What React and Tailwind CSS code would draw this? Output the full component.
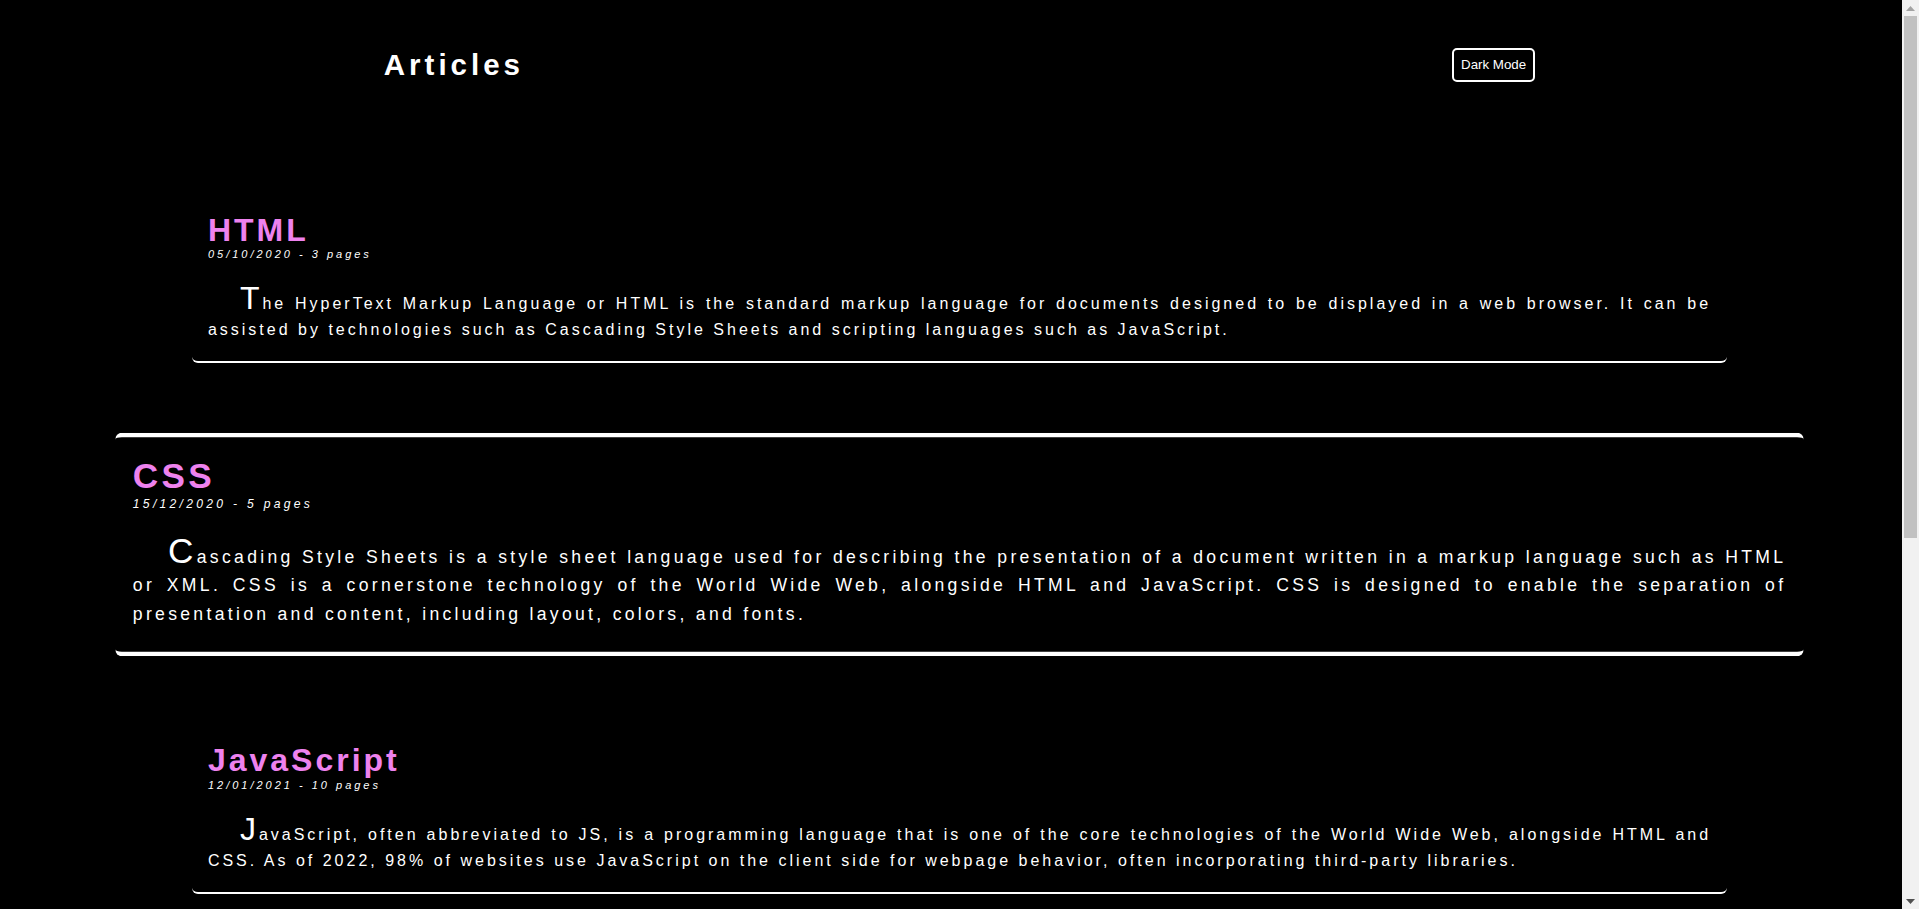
import React from "react";

const articles = [
  {
    title: "HTML",
    meta: "05/10/2020 - 3 pages",
    text: "The HyperText Markup Language or HTML is the standard markup language for documents designed to be displayed in a web browser. It can be assisted by technologies such as Cascading Style Sheets and scripting languages such as JavaScript.",
    active: false,
  },
  {
    title: "CSS",
    meta: "15/12/2020 - 5 pages",
    text: "Cascading Style Sheets is a style sheet language used for describing the presentation of a document written in a markup language such as HTML or XML. CSS is a cornerstone technology of the World Wide Web, alongside HTML and JavaScript. CSS is designed to enable the separation of presentation and content, including layout, colors, and fonts.",
    active: true,
  },
  {
    title: "JavaScript",
    meta: "12/01/2021 - 10 pages",
    text: "JavaScript, often abbreviated to JS, is a programming language that is one of the core technologies of the World Wide Web, alongside HTML and CSS. As of 2022, 98% of websites use JavaScript on the client side for webpage behavior, often incorporating third-party libraries.",
    active: false,
  },
];

function Card({ a }) {
  const base = "w-[80vw] ml-[10vw] rounded-md border-white px-4 bg-black";
  const cls = a.active
    ? base + " border-y-4 pt-[17px] pb-[21px] scale-110"
    : base + " border-b-2 pt-4 pb-[18px]";
  return (
    <article className={cls}>
      <h2 className="text-[32px] leading-[1.15] font-bold tracking-[3px] text-[#ee82ee]">
        {a.title}
      </h2>
      <div className="text-[11px] leading-[1.15] italic tracking-[3px] text-white">
        {a.meta}
      </div>
      <p className="mt-6 text-[16px] leading-[26px] tracking-[3px] text-justify indent-8 text-white first-letter:text-[32px]">
        {a.text}
      </p>
    </article>
  );
}

function Scrollbar() {
  return (
    <div className="w-[17px] h-screen shrink-0 bg-[#f1f1f1] flex flex-col items-center">
      <div className="h-[16px] w-full flex items-center justify-center">
        <svg width="9" height="5" viewBox="0 0 9 5">
          <polygon points="4.5,0 9,5 0,5" fill="#a3a3a3" />
        </svg>
      </div>
      <div className="w-[13px] h-[522px] bg-[#c1c1c1]" />
      <div className="flex-1" />
      <div className="h-[16px] w-full flex items-center justify-center">
        <svg width="9" height="5" viewBox="0 0 9 5">
          <polygon points="0,0 9,0 4.5,5" fill="#505050" />
        </svg>
      </div>
    </div>
  );
}

export default function App() {
  return (
    <div className="h-screen overflow-hidden flex bg-black">
      <div className="flex-1 h-screen overflow-hidden bg-black text-white font-['Liberation_Sans',Arial,sans-serif]">
        <header className="h-[130px] w-[60vw] ml-[20vw] flex items-center justify-between">
          <h1 className="text-[29.5px] leading-[1.15] font-bold tracking-[4px] text-white">
            Articles
          </h1>
          <button className="border-2 border-white rounded-[5px] bg-black text-white text-[13.33px] leading-[1.15] px-[7px] py-[7px]">
            Dark Mode
          </button>
        </header>
        <main className="flex flex-col gap-20 pt-[65.5px] pb-20">
          {articles.map((a) => (
            <Card key={a.title} a={a} />
          ))}
        </main>
      </div>
      <Scrollbar />
    </div>
  );
}
